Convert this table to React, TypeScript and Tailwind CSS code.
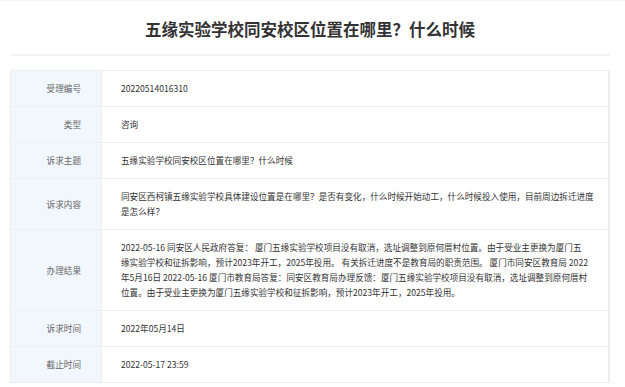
const rows: { label: string; lines: string[] }[] = [
  { label: '受理编号', lines: ['20220514016310'] },
  { label: '类型', lines: ['咨询'] },
  { label: '诉求主题', lines: ['五缘实验学校同安校区位置在哪里？什么时候'] },
  {
    label: '诉求内容',
    lines: [
      '同安区西柯镇五缘实验学校具体建设位置是在哪里？是否有变化，什么时候开始动工，什么时候投入使用，目前周边拆迁进度',
      '是怎么样？',
    ],
  },
  {
    label: '办理结果',
    lines: [
      '2022-05-16 同安区人民政府答复： 厦门五缘实验学校项目没有取消，选址调整到原何厝村位置。由于受业主更换为厦门五',
      '缘实验学校和征拆影响，预计2023年开工，2025年投用。 有关拆迁进度不是教育局的职责范围。 厦门市同安区教育局 2022',
      '年5月16日 2022-05-16 厦门市教育局答复：同安区教育局办理反馈：厦门五缘实验学校项目没有取消，选址调整到原何厝村',
      '位置。由于受业主更换为厦门五缘实验学校和征拆影响，预计2023年开工，2025年投用。',
    ],
  },
  { label: '诉求时间', lines: ['2022年05月14日'] },
  { label: '截止时间', lines: ['2022-05-17 23:59'] },
];

export default function App() {
  return (
    <div
      className="min-h-screen w-[625px] bg-white border-t border-[#f3f3f3]"
      style={{ fontFamily: '"Noto Sans CJK SC", "Noto Sans", sans-serif' }}
    >
      <div className="ml-[10px] w-[600px]">
        <div className="pt-[16px] pb-[13px] border-b-2 border-[#f3f3f3]">
          <h1 className="text-center text-[16.5px] leading-[24px] font-bold text-[#333]">
            五缘实验学校同安校区位置在哪里？什么时候
          </h1>
        </div>

        <div className="mt-[14px] border border-[#eeeeee] border-r-2">
          {rows.map((row, i) => (
            <div
              key={row.label}
              className={`flex ${i > 0 ? 'border-t border-[#eeeeee]' : ''}`}
            >
              <div className="w-[91px] shrink-0 bg-[#f2f7fd] border-r border-[#eeeeee] flex items-center justify-end pr-[20px] text-[8.6px] text-[#666]">
                {row.label}
              </div>
              <div className="flex-1 pl-[19px] pr-[10px] py-[10px] text-[8.6px] leading-[15px] text-[#333]">
                {row.lines.map((line) => (
                  <div key={line} className="whitespace-nowrap">
                    {line}
                  </div>
                ))}
              </div>
            </div>
          ))}
        </div>
      </div>
    </div>
  );
}
